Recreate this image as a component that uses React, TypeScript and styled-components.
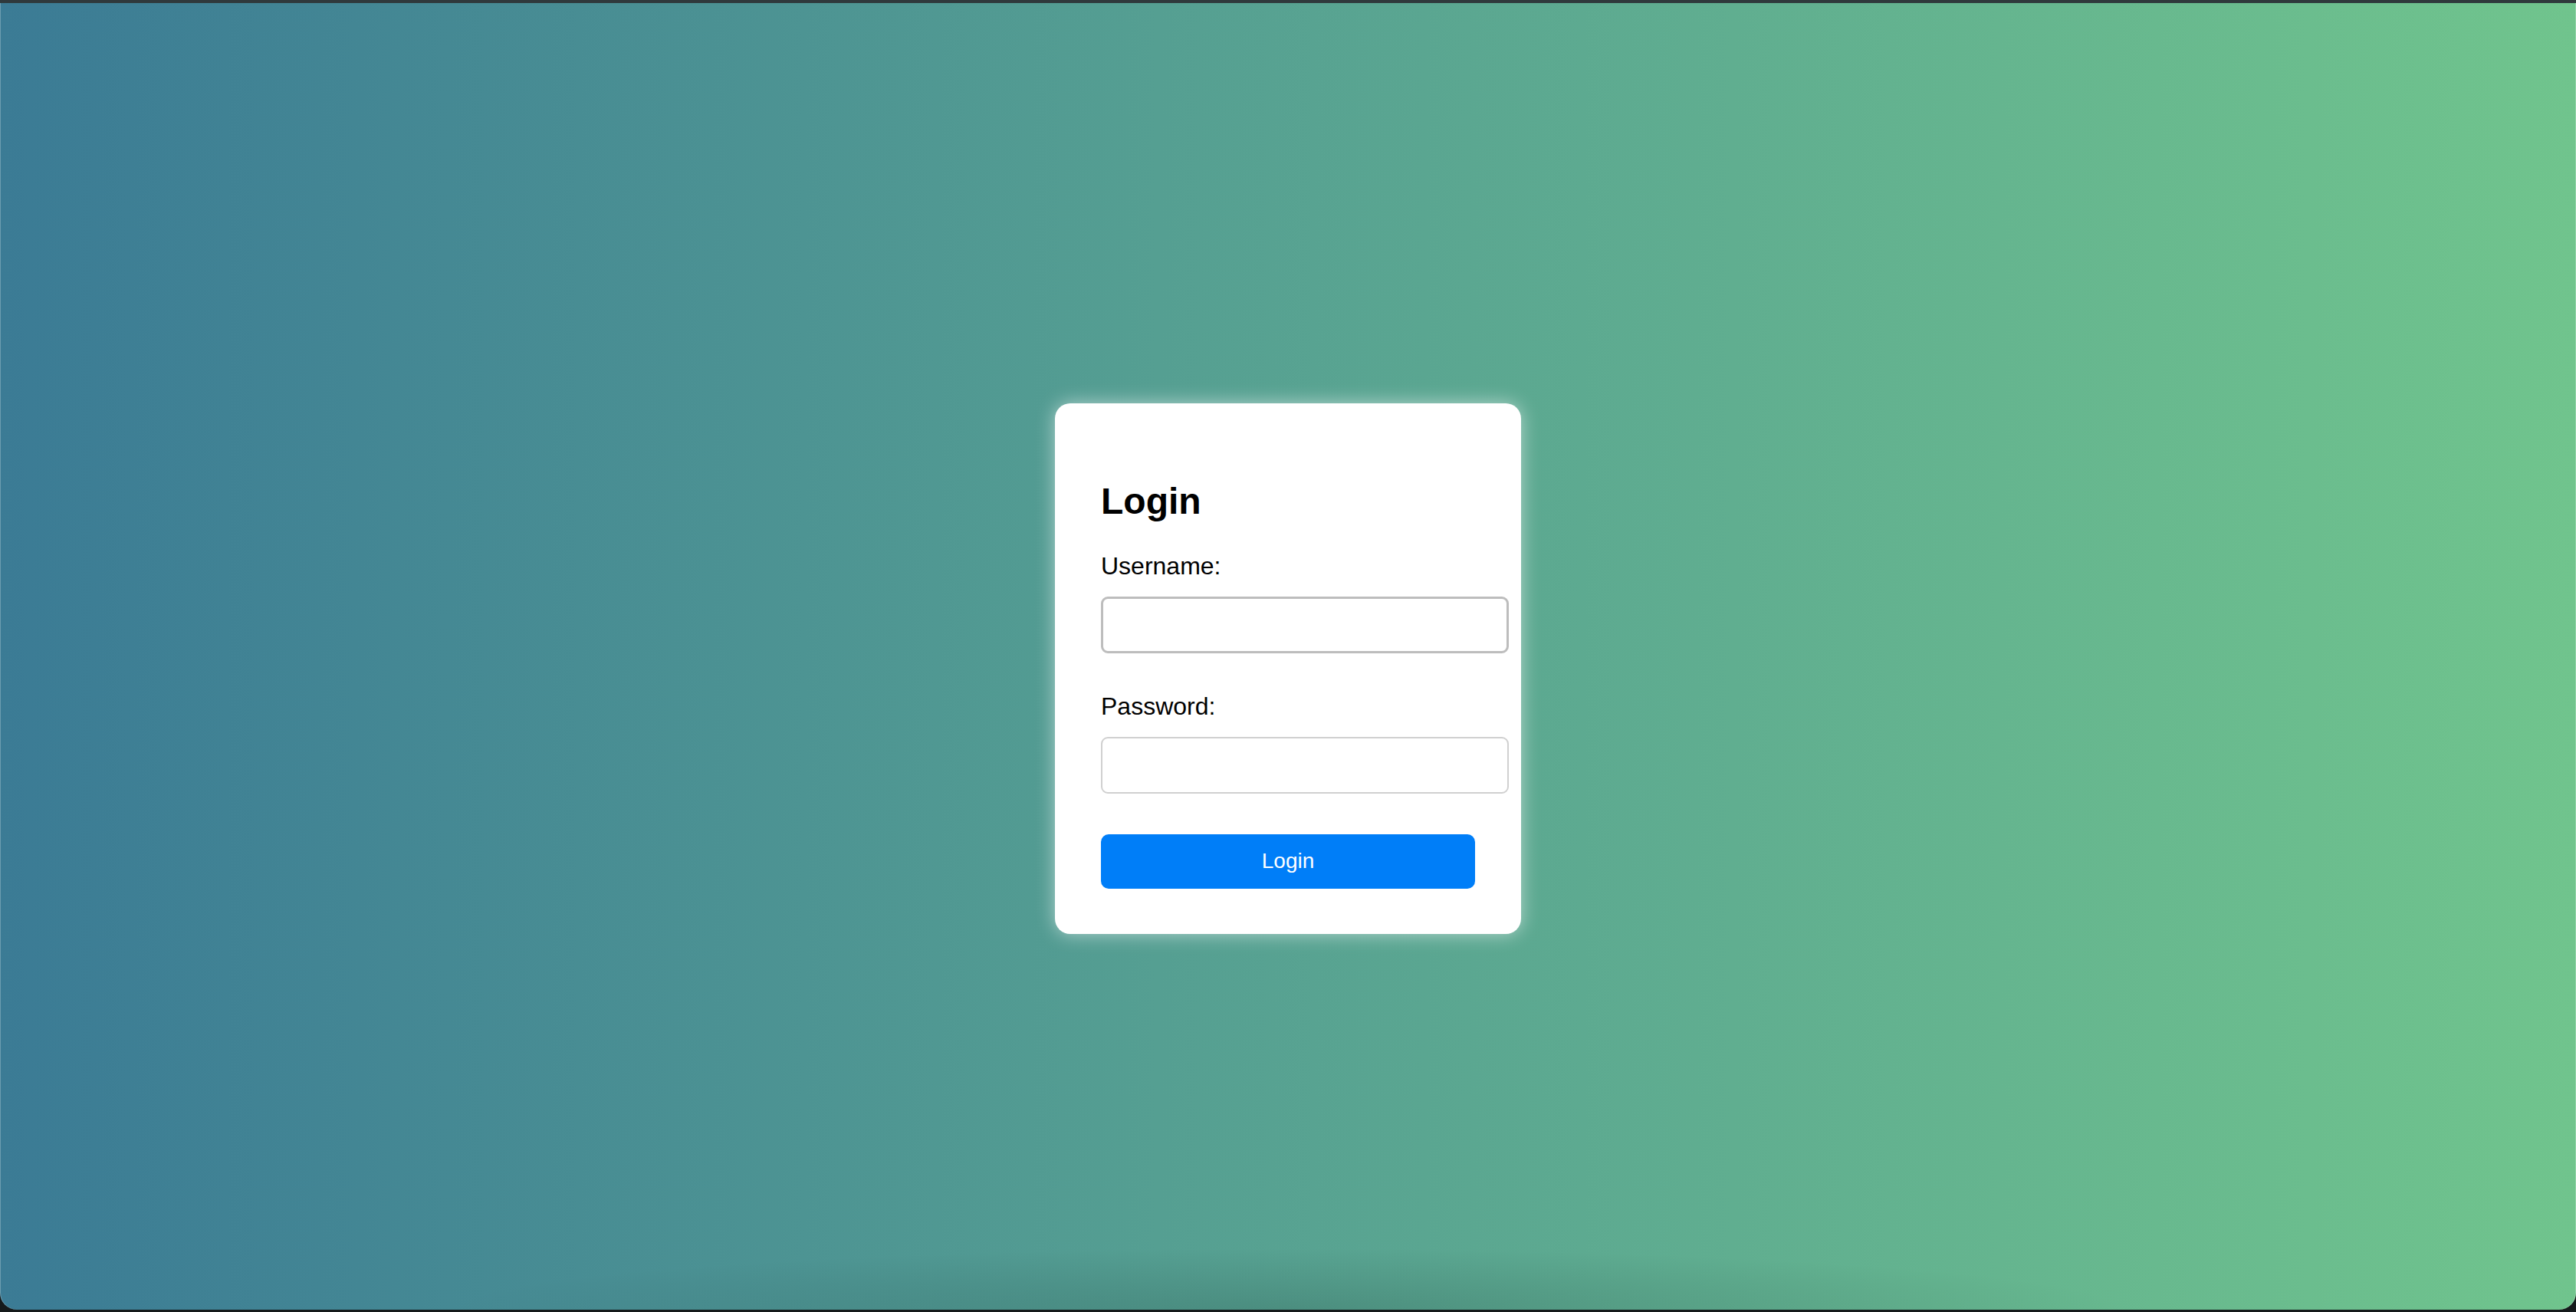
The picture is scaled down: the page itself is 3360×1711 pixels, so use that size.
import styled, { createGlobalStyle } from "styled-components";

const GlobalStyle = createGlobalStyle`
  html, body {
    margin: 0;
    padding: 0;
    background: #151a1b;
    font-family: "Liberation Sans", Arial, sans-serif;
  }
  #root {
    min-height: 1711px;
  }
`;

const Screen = styled.div`
  box-sizing: border-box;
  height: 1708px;
  display: flex;
  justify-content: center;
  align-items: center;
  padding-top: 31px;
  border-top: 4px solid #2f393c;
  border-radius: 0 0 22px 22px;
  background:
    radial-gradient(ellipse 1100px 80px at 50% 100%, rgba(20, 50, 45, 0.18), transparent),
    linear-gradient(to right, #3b7b95 0%, #559f92 45%, #70c48d 100%);
  box-shadow: inset 1px 0 0 rgba(255, 255, 255, 0.25),
    inset -1px 0 0 rgba(255, 255, 255, 0.25);
`;

const Card = styled.form`
  box-sizing: border-box;
  width: 608px;
  padding: 60px 60px 59px;
  background: #ffffff;
  border-radius: 20px;
  box-shadow: 0 0 24px rgba(255, 255, 255, 0.55);
`;

const Title = styled.h2`
  margin: 40px 0 38px;
  font-size: 48px;
  line-height: 56px;
  font-weight: 700;
  color: #000;
`;

const Label = styled.label`
  display: block;
  margin-bottom: 22px;
  font-size: 32px;
  line-height: 36px;
  color: #000;
`;

const Input = styled.input<{ $focused?: boolean }>`
  display: block;
  box-sizing: border-box;
  width: calc(100% + 44px);
  height: 74px;
  margin: 0 0 ${(p) => (p.$focused ? "51px" : "53px")};
  padding: 0 20px;
  border: ${(p) => (p.$focused ? "3px solid #bdbdbd" : "2px solid #d0d0d0")};
  border-radius: 9px;
  font-size: 28px;
  font-family: inherit;
  outline: none;
  background: #fff;
`;

const SubmitButton = styled.button`
  display: block;
  width: 100%;
  height: 71px;
  border: none;
  border-radius: 10px;
  background: #007ef8;
  color: #ffffff;
  font-family: inherit;
  font-size: 28px;
  cursor: pointer;
`;

export default function App() {
  return (
    <>
      <GlobalStyle />
      <Screen>
        <Card onSubmit={(e) => e.preventDefault()}>
          <Title>Login</Title>
          <Label htmlFor="username">Username:</Label>
          <Input id="username" type="text" $focused />
          <Label htmlFor="password">Password:</Label>
          <Input id="password" type="password" />
          <SubmitButton type="submit">Login</SubmitButton>
        </Card>
      </Screen>
    </>
  );
}
